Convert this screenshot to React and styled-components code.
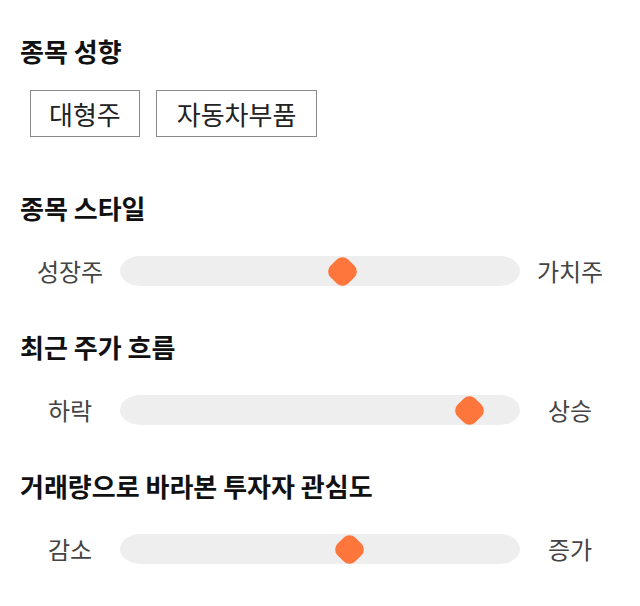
import React from "react";
import styled, { createGlobalStyle } from "styled-components";

const GlobalStyle = createGlobalStyle`
  * { box-sizing: border-box; }
  body {
    margin: 0;
    background: #ffffff;
    font-family: "Noto Sans CJK KR", "Noto Sans", sans-serif;
    color: #111;
  }
`;

const Page = styled.div`
  width: 640px;
  padding: 35px 20px 0 20px;
  display: flex;
  flex-direction: column;
`;

const Section = styled.section`
  display: flex;
  flex-direction: column;
  margin-top: ${({ $gap }) => $gap || 0}px;
`;

const Title = styled.h2`
  margin: 0;
  font-size: 26px;
  font-weight: 700;
  line-height: 32px;
  color: #111;
`;

const ChipRow = styled.div`
  display: flex;
  gap: 16px;
  padding-left: 10px;
  margin-top: 23px;
`;

const Chip = styled.div`
  height: 47px;
  padding: 0 ${({ $pad }) => $pad || 18}px;
  border: 1px solid #8a8a8a;
  font-size: 26px;
  line-height: 45px;
  color: #222;
  background: #fff;
`;

const SliderRow = styled.div`
  display: grid;
  grid-template-columns: 100px 400px 100px;
  align-items: center;
  margin-top: 32px;
  height: 30px;
`;

const Label = styled.span`
  text-align: center;
  font-size: 24px;
  color: #444;
  line-height: 30px;
`;

const Track = styled.div`
  position: relative;
  height: 30px;
  background: #eeeeee;
  border-radius: 20px / 15px;
`;

const Thumb = styled.div`
  position: absolute;
  top: 0;
  width: 30px;
  height: 30px;
  display: flex;
  align-items: center;
  justify-content: center;

  &::before {
    content: "";
    flex: none;
    width: 25px;
    height: 25px;
    border-radius: 8px;
    background: #ff763d;
    transform: rotate(45deg);
  }
`;

const sliders = [
  { title: "종목 스타일", left: "성장주", right: "가치주", value: 0.562 },
  { title: "최근 주가 흐름", left: "하락", right: "상승", value: 0.903 },
  { title: "거래량으로 바라본 투자자 관심도", left: "감소", right: "증가", value: 0.58 },
];

const Slider = ({ left, right, value }) => (
  <SliderRow>
    <Label>{left}</Label>
    <Track>
      <Thumb style={{ left: `${value * 370}px` }} />
    </Track>
    <Label>{right}</Label>
  </SliderRow>
);

const App = () => {
  return (
    <>
      <GlobalStyle />
      <Page>
        <Section>
          <Title>종목 성향</Title>
          <ChipRow>
            <Chip>대형주</Chip>
            <Chip $pad={20}>자동차부품</Chip>
          </ChipRow>
        </Section>
        {sliders.map((s, i) => (
          <Section key={i} $gap={i === 0 ? 55 : 45}>
            <Title>{s.title}</Title>
            <Slider left={s.left} right={s.right} value={s.value} />
          </Section>
        ))}
      </Page>
    </>
  );
};

export default App;
